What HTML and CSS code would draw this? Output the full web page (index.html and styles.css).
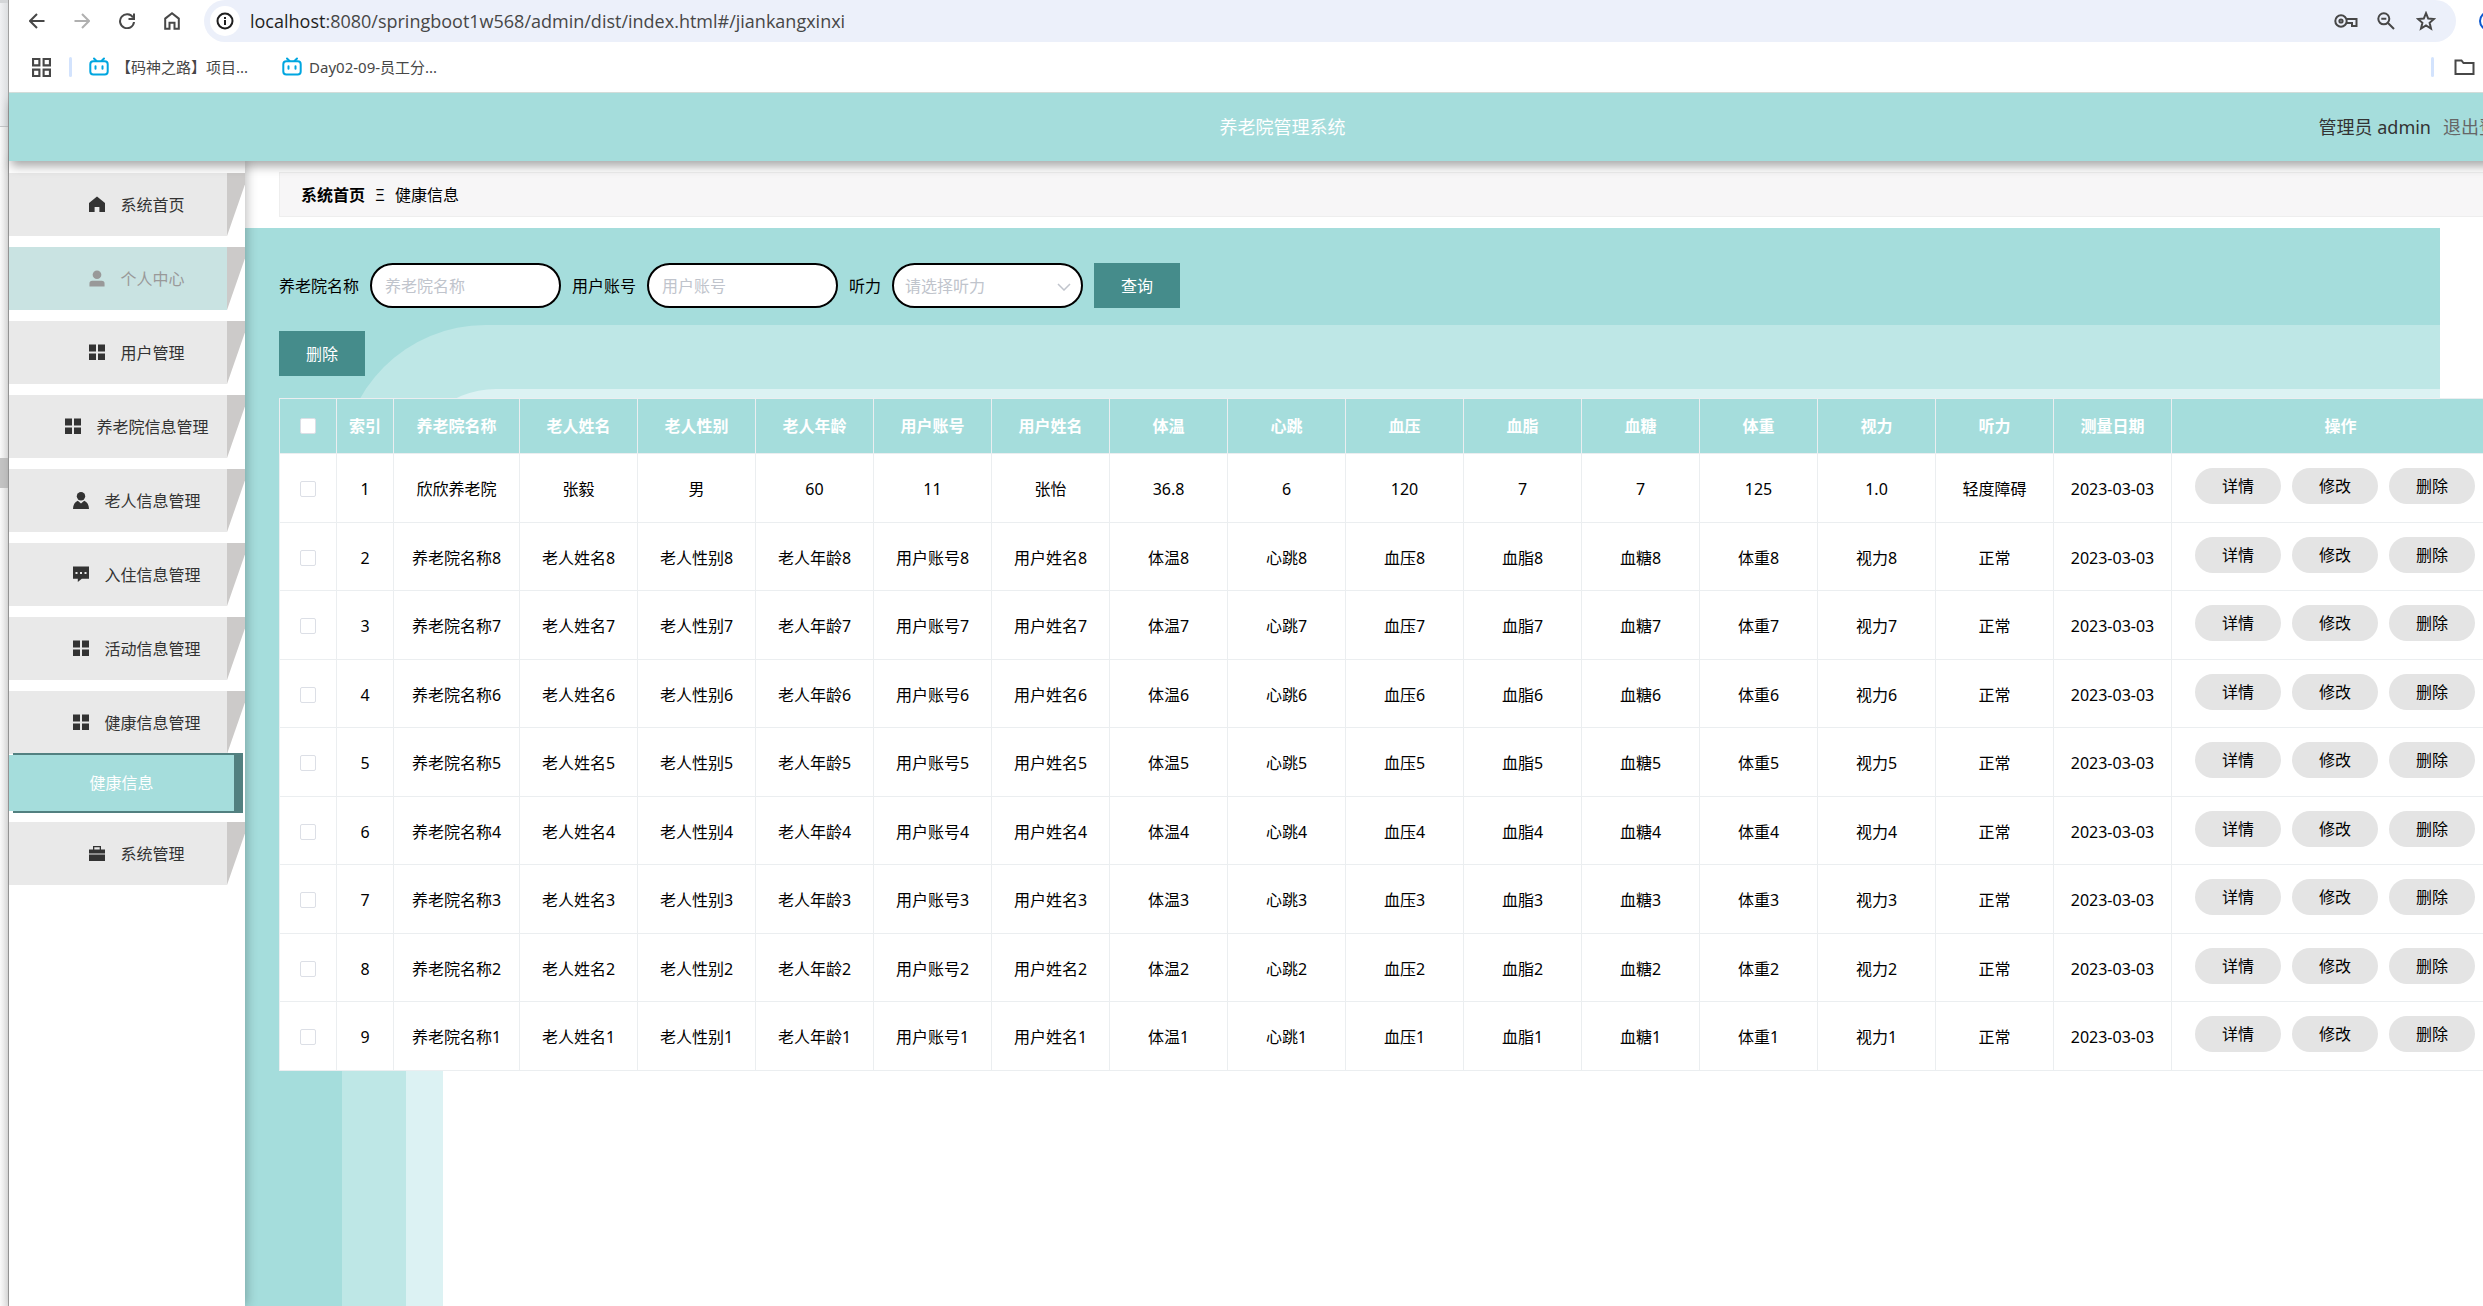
FILE: index.html
```html
<!DOCTYPE html>
<html lang="zh-CN">
  <head>
    <meta charset="UTF-8" />
    <meta name="viewport" content="width=device-width, initial-scale=1.0" />
    <title>养老院管理系统</title>
    <link rel="stylesheet" href="styles.css">
  </head>
  <body>
    <!-- shared icon shapes -->
    <svg class="defs" aria-hidden="true">
      <symbol id="i-home" viewBox="0 0 16 16"><path d="M8 0 0 6.400V15.500h5.600v-5h4.800v5H16V6.400z" /></symbol>
      <symbol id="i-user" viewBox="0 0 16 18"><circle cx="8" cy="5" r="4.600" /><path d="M0 17.500v-3a3 3 0 0 1 3-3h10a3 3 0 0 1 3 3v3z" /></symbol>
      <symbol id="i-menu" viewBox="0 0 16 16"><path d="M0 0h7v7H0zM9 0h7v7H9zM0 9h7v6.500H0zM9 9h7v6.500H9z" /></symbol>
      <symbol id="i-person" viewBox="0 0 16 17"><circle cx="8" cy="4.200" r="4.200" /><path d="M0 17c0-4.200 1.800-7 4.800-8.300L8 11.500l3.200-2.800C14.200 10 16 12.800 16 17z" /></symbol>
      <symbol id="i-chat" viewBox="0 0 16 16"><path fill-rule="evenodd" d="M0 0h16v12.300H8.800L4.800 15.500v-3.200H0zM2.500 5.500v2h2v-2zM7 5.500v2h2v-2zM11.500 5.500v2h2v-2z" /></symbol>
      <symbol id="i-case" viewBox="0 0 16 16"><path fill-rule="evenodd" d="M4 4V.500h8V4h4v4H0V4zM5.300 4h5.400V1.800H5.300zM0 9h16v6.500H0z" /></symbol>
      <symbol id="i-bili" viewBox="0 0 20 20"><path d="M5 1.500 7.500 4M15 1.500 12.500 4" /><rect x="1.300" y="4.300" width="17.400" height="13.200" rx="3" /><path d="M6.500 9.200v2.600M13.500 9.200v2.600" /></symbol>
    </svg>

    <div class="window">
      <div class="edge"><span class="edge-tab"></span><span class="edge-thumb"></span></div>

      <div class="screen">
        <div class="toolbar">
          <div class="nav-icons">
            <svg class="tool" viewBox="0 0 16 16"><path d="M15.500 8H1.500M8 1 1 8l7 7" /></svg>
            <svg class="tool off" viewBox="0 0 16 16"><path d="M.500 8h14M8 1l7 7-7 7" /></svg>
            <svg class="tool" viewBox="0 0 16 16"><path d="M14 4.500A7 7 0 1 0 15 9M15 .500V6H9.500" /></svg>
            <svg class="tool" viewBox="0 0 16 18"><path d="M1.200 16.800V6.600L8 1.300l6.800 5.300v10.200h-4.300v-6h-5v6z" /></svg>
          </div>
          <div class="address">
            <span class="info"><svg class="tool" viewBox="0 0 18 18"><circle cx="9" cy="9" r="7.500" /><path d="M9 8v5M9 5v2" /></svg></span>
            <span class="url"><b>localhost</b>:8080/springboot1w568/admin/dist/index.html#/jiankangxinxi</span>
            <svg class="tool key" viewBox="0 0 24 14"><circle cx="7" cy="7" r="5.700" /><circle cx="7" cy="7" r="1.600" /><path d="M12 5h10.500v7H18V9h-5.500" /></svg>
            <svg class="tool lens" viewBox="0 0 18 18"><circle cx="6.800" cy="6.800" r="5.500" /><path d="M11 11l6 6M4.300 6.800h5" /></svg>
            <svg class="tool star" viewBox="0 0 20 20"><path d="M10 2.200 12.200 7.600l5.800.4-4.400 3.800 1.400 5.700-5-3.100-5 3.100 1.400-5.700L2 8l5.800-.400z" /></svg>
          </div>
          <span class="profile"></span>
        </div>

        <div class="bookmarks">
          <svg class="tool apps" viewBox="0 0 18 18"><path d="M1 1h6v6H1zM11 1h6v6h-6zM1 11h6v6H1zM11 11h6v6h-6z" /></svg>
          <span class="bar"></span>
          <a class="mark" href="#"><svg class="bili"><use href="#i-bili" /></svg>【码神之路】项目...</a>
          <a class="mark" href="#"><svg class="bili"><use href="#i-bili" /></svg>Day02-09-员工分...</a>
          <span class="bar last"></span>
          <svg class="tool folder" viewBox="0 0 20 16"><path d="M1 1.500h6l2 2.500h10v11H1z" /></svg>
        </div>

        <div class="app">
          <header class="header">
            <h1>养老院管理系统</h1>
            <div class="account"><span>管理员 admin</span><a href="#">退出登录</a></div>
          </header>

          <div class="body">
            <aside class="sidebar">
              <a class="item" href="#"><span><svg><use href="#i-home" /></svg>系统首页</span></a>
              <a class="item hover" href="#"><span><svg><use href="#i-user" /></svg>个人中心</span></a>
              <a class="item" href="#"><span><svg><use href="#i-menu" /></svg>用户管理</span></a>
              <a class="item" href="#"><span><svg><use href="#i-menu" /></svg>养老院信息管理</span></a>
              <a class="item" href="#"><span><svg><use href="#i-person" /></svg>老人信息管理</span></a>
              <a class="item" href="#"><span><svg><use href="#i-chat" /></svg>入住信息管理</span></a>
              <a class="item" href="#"><span><svg><use href="#i-menu" /></svg>活动信息管理</span></a>
              <a class="item open" href="#"><span><svg><use href="#i-menu" /></svg>健康信息管理</span></a>
              <a class="sub" href="#"><span>健康信息</span></a>
              <a class="item" href="#"><span><svg><use href="#i-case" /></svg>系统管理</span></a>
            </aside>

            <main class="main">
              <nav class="crumbs"><b>系统首页</b><span>Ξ</span><span>健康信息</span></nav>

              <div class="panel">
                <div class="rings"></div>
                <form class="search">
                  <label for="name">养老院名称</label>
                  <input class="field" id="name" type="text" placeholder="养老院名称" />
                  <label for="account">用户账号</label>
                  <input class="field" id="account" type="text" placeholder="用户账号" />
                  <label for="hearing">听力</label>
                  <div class="select">
                    <select class="field" id="hearing">
                      <option>请选择听力</option>
                      <option>正常</option>
                      <option>轻度障碍</option>
                    </select>
                    <svg viewBox="0 0 14 8"><path d="M1 1l6 6 6-6" /></svg>
                  </div>
                  <button class="btn" type="button">查询</button>
                </form>
                <div class="actions"><button class="btn" type="button">删除</button></div>

                <table class="table">
                  <colgroup>
                    <col class="c-small" span="2" />
                    <col class="c-name" />
                    <col class="c-data" span="14" />
                    <col class="c-ops" />
                  </colgroup>
                  <thead>
                    <tr>
                      <th><input type="checkbox" aria-label="全选" /></th>
                      <th>索引</th>
                      <th>养老院名称</th>
                      <th>老人姓名</th>
                      <th>老人性别</th>
                      <th>老人年龄</th>
                      <th>用户账号</th>
                      <th>用户姓名</th>
                      <th>体温</th>
                      <th>心跳</th>
                      <th>血压</th>
                      <th>血脂</th>
                      <th>血糖</th>
                      <th>体重</th>
                      <th>视力</th>
                      <th>听力</th>
                      <th>测量日期</th>
                      <th>操作</th>
                    </tr>
                  </thead>
                  <tbody id="rows"></tbody>
                </table>
              </div>
            </main>
          </div>
        </div>
      </div>
    </div>

    <script>
      const fields = ["养老院名称", "老人姓名", "老人性别", "老人年龄", "用户账号", "用户姓名", "体温", "心跳", "血压", "血脂", "血糖", "体重", "视力"];
      const list = [
        ["欣欣养老院", "张毅", "男", "60", "11", "张怡", "36.8", "6", "120", "7", "7", "125", "1.0", "轻度障碍", "2023-03-03"]
      ];
      for (let n = 8; n >= 1; n--) {
        list.push([...fields.map((f) => f + n), "正常", "2023-03-03"]);
      }

      document.getElementById("rows").innerHTML = list
        .map(
          (row, i) => `<tr>
            <td><input type="checkbox" aria-label="选择第${i + 1}行" /></td>
            <td>${i + 1}</td>
            ${row.map((v) => `<td>${v}</td>`).join("")}
            <td class="ops"><div><button type="button">详情</button><button type="button">修改</button><button type="button">删除</button></div></td>
          </tr>`
        )
        .join("");
    </script>
  </body>
</html>
```
FILE: styles.css
```css
* {
  box-sizing: border-box;
}
body {
  margin: 0;
  overflow: hidden;
  background: #fff;
  color: #000;
  font-family: "Noto Sans", "Noto Sans CJK SC", sans-serif;
  font-size: 16px;
  line-height: 24px;
}
a {
  color: inherit;
  text-decoration: none;
}
button,
input,
select {
  font: inherit;
}
.defs {
  display: none;
}
.window {
  display: flex;
  height: 100vh;
}

/* Neighbouring window at the left */
.edge {
  flex: none;
  width: 9px;
  background: linear-gradient(to right, #fafafa, #e4e4e4);
  border-right: 1px solid #a0a0a0;
}
.edge-tab {
  display: block;
  height: 127px;
  border-top: 3px solid #d4d6d8;
  border-bottom: 1px solid #c4c6c8;
  background: linear-gradient(to right, #f0f1f3, #dcdee0);
}
.edge-thumb {
  display: block;
  height: 30px;
  margin-top: 331px;
  background: #c4c4c4;
}
.screen {
  flex: 1;
  min-width: 0;
  display: flex;
  flex-direction: column;
}

/* Browser toolbar */
.tool {
  flex: none;
  width: 16px;
  height: 16px;
  fill: none;
  stroke: #474747;
  stroke-width: 2;
}
.tool.off {
  stroke: #b0b0b0;
}
.toolbar {
  flex: none;
  display: flex;
  align-items: center;
  height: 42px;
  overflow: hidden;
}
.nav-icons {
  display: flex;
  align-items: center;
  gap: 29px;
  padding: 0 24px 0 20px;
}
.nav-icons .tool:last-child {
  height: 18px;
}
.address {
  flex: 1;
  display: flex;
  align-items: center;
  height: 42px;
  padding: 0 20px 0 6px;
  border-radius: 21px;
  background: #ecf0fa;
}
.info {
  display: flex;
  align-items: center;
  justify-content: center;
  width: 30px;
  height: 30px;
  border-radius: 50%;
  background: #fff;
}
.info .tool {
  width: 18px;
  height: 18px;
  stroke: #1f1f1f;
}
.url {
  flex: 1;
  margin-left: 10px;
  font-family: "Open Sans", sans-serif;
  font-size: 18px;
  color: #474747;
}
.url b {
  font-weight: 400;
  color: #1f1f1f;
}
.tool.key {
  width: 24px;
  height: 14px;
}
.tool.lens {
  width: 18px;
  height: 18px;
  margin: 0 21px 0 19px;
}
.tool.star {
  width: 20px;
  height: 20px;
}
.profile {
  width: 20px;
  height: 20px;
  margin: 0 -16px 0 23px;
  border: 2px solid #0b57d0;
  border-radius: 50%;
}
.bookmarks {
  flex: none;
  display: flex;
  align-items: center;
  height: 51px;
  padding: 0 8px 0 23px;
  border-bottom: 1px solid #d5dfdc;
  font-size: 15px;
  color: #474747;
}
.tool.apps {
  width: 19px;
  height: 19px;
}
.bar {
  width: 3px;
  height: 20px;
  margin: 0 17px 0 18px;
  border-radius: 2px;
  background: #d3e3fd;
}
.bar.last {
  margin: 0 20px 0 auto;
}
.mark {
  display: flex;
  align-items: center;
  gap: 7px;
  margin-right: 34px;
}
.bili {
  width: 20px;
  height: 20px;
  fill: none;
  stroke: #00a6e0;
  stroke-width: 2;
  stroke-linecap: round;
}
.tool.folder {
  width: 21px;
  height: 16px;
}

/* App, wider than the window */
.app {
  flex: 1;
  display: flex;
  flex-direction: column;
  margin-right: -73px;
}
.header {
  flex: none;
  position: relative;
  z-index: 2;
  display: grid;
  grid-template-columns: 1fr auto 1fr;
  align-items: center;
  height: 68px;
  padding: 0 41px;
  background: #a5dddc;
  box-shadow: 0 7px 10px -2px rgba(0, 0, 0, 0.35);
}
.header h1 {
  grid-column: 2;
  margin: 0;
  font-size: 18px;
  font-weight: 400;
  color: #fff;
}
.account {
  display: flex;
  justify-content: flex-end;
  gap: 12px;
  font-size: 18px;
  color: #333;
}
.account a {
  color: #666;
}
.body {
  flex: 1;
  display: flex;
}

/* Side menu */
.sidebar {
  flex: none;
  position: relative;
  z-index: 1;
  width: 236px;
  padding-top: 12px;
  background: #fff;
  box-shadow: 2px 0 10px rgba(0, 0, 0, 0.25);
}
.item {
  display: flex;
  align-items: stretch;
  height: 63px;
  margin-bottom: 11px;
  color: #333;
}
.item span {
  flex: 1;
  display: flex;
  align-items: center;
  justify-content: center;
  gap: 15px;
  padding-left: 38px;
  background: #e9e9e9;
}
.item::after {
  content: "";
  width: 18px;
  background: #cccac9;
  clip-path: polygon(0 0, 100% 0, 100% 18%, 0 100%);
}
.item svg {
  width: 16px;
  height: 17px;
  fill: currentColor;
}
.item.hover {
  color: #999;
}
.item.hover span {
  background: #c9e3e2;
}
.item.open {
  margin-bottom: 0;
}
.sub {
  display: block;
  position: relative;
  margin: -1px 2px 9px 0;
  padding: 2px 9px 2px 0;
  background: linear-gradient(#528080, #528080) no-repeat 4px 0;
}
.sub span {
  display: block;
  background: #a5dddc;
  color: #fff;
  line-height: 56px;
  text-align: center;
}

/* Content */
.main {
  flex: 1;
  display: flex;
  flex-direction: column;
  padding-top: 11px;
}
.crumbs {
  flex: none;
  display: flex;
  align-items: center;
  gap: 10px;
  height: 45px;
  margin: 0 0 11px 34px;
  padding: 0 21px;
  border: 1px solid #eee;
  background: #f7f6f7;
}
.panel {
  flex: 1;
  position: relative;
  width: 95%;
  padding: 35px 34px;
}
.rings {
  position: absolute;
  inset: 0;
  overflow: hidden;
  background: #a5dddc;
}
.rings::before {
  content: "";
  position: absolute;
  inset: 198px 0 0 198px;
  border-top-left-radius: 53px;
  background: #fff;
  box-shadow: 0 0 0 37px #dcf2f3, 0 0 0 101px #bee7e6;
}
.search,
.actions,
.table {
  position: relative;
}
.search {
  display: flex;
  align-items: center;
  gap: 11px;
  margin-bottom: 23px;
}
.field {
  width: 191px;
  height: 45px;
  padding: 0 13px;
  border: 2px solid #000;
  border-radius: 23px;
  background: #fff;
  outline: none;
}
.field::placeholder {
  color: #c0c4cc;
}
.select {
  position: relative;
}
select.field {
  display: block;
  appearance: none;
  padding: 0 11px;
  color: #c0c4cc;
}
.select svg {
  position: absolute;
  right: 12px;
  top: 20px;
  width: 14px;
  height: 8px;
  fill: none;
  stroke: #c0c4cc;
  stroke-width: 1.500;
  pointer-events: none;
}
.btn {
  width: 86px;
  height: 45px;
  padding: 0;
  border: none;
  background: #458c8b;
  color: #fff;
  cursor: pointer;
}
.actions {
  display: flex;
  margin-bottom: 22px;
}

/* Data table */
.table {
  table-layout: fixed;
  width: 2231px;
  border-collapse: collapse;
  background: #fff;
  text-align: center;
  white-space: nowrap;
}
.c-small {
  width: 57px;
}
.c-name {
  width: 126px;
}
.c-data {
  width: 118px;
}
.table th,
.table td {
  padding: 0;
  border: 1px solid #ebeef0;
}
.table th {
  height: 55px;
  background: #a5dddc;
  color: #fff;
}
.table td {
  height: 69px;
  padding-top: 2px;
}
.table tr:nth-child(even) td {
  height: 68px;
}
.table input {
  appearance: none;
  display: block;
  width: 16px;
  height: 16px;
  margin: 0 auto;
  border: 1px solid #dcdfe6;
  border-radius: 2px;
  background: #fff;
}
.ops div {
  display: flex;
  gap: 11px;
  padding: 0 0 6px 23px;
}
.ops button {
  width: 86px;
  height: 36px;
  padding: 0;
  border: none;
  border-radius: 18px;
  background: #e4e4e4;
  color: #000;
  cursor: pointer;
}
```
